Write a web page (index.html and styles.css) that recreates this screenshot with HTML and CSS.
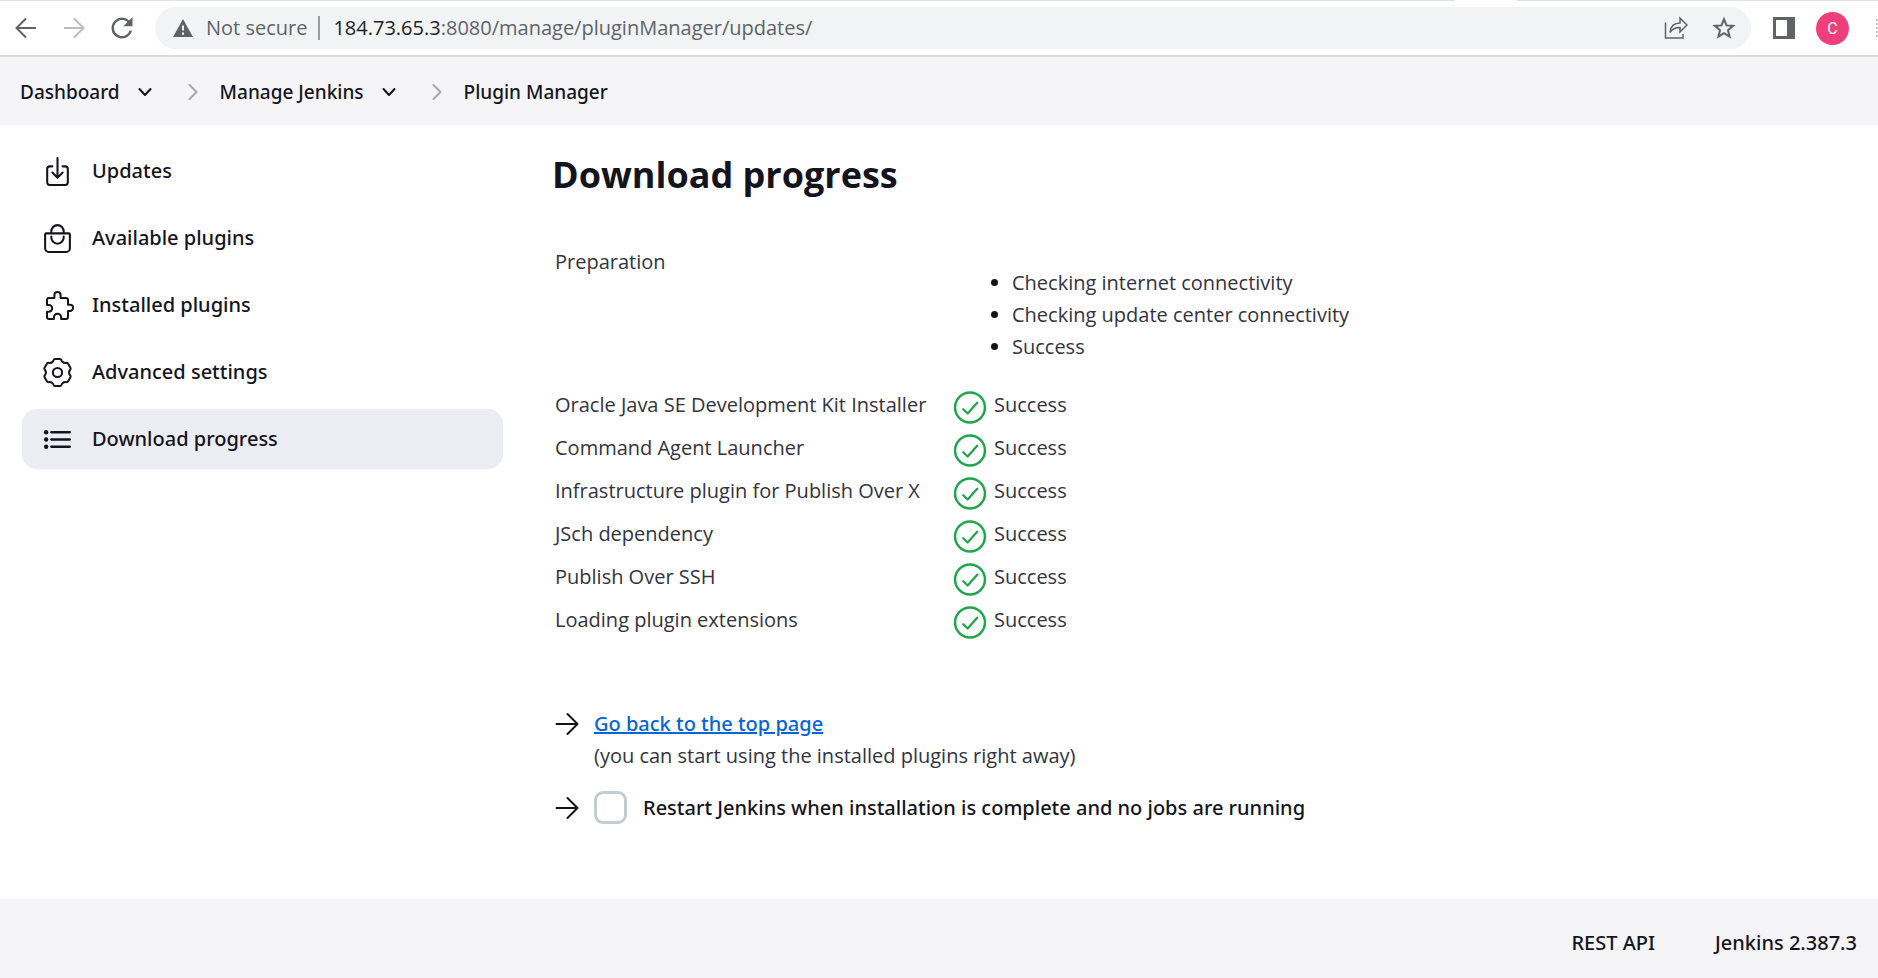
FILE: index.html
```html
<!DOCTYPE html>
<html lang="en">
<head>
<meta charset="utf-8">
<title>Download progress - Plugin Manager [Jenkins]</title>
<link rel="stylesheet" href="styles.css">
</head>
<body>
<svg class="defs" aria-hidden="true">
  <symbol id="success" viewBox="0 0 34 34"><circle cx="17" cy="17" r="15.4" stroke-width="2.5"/><path d="M10 18.8l4.6 4.4L24.4 12" stroke-width="2.3"/></symbol>
  <symbol id="arrow" viewBox="0 0 24 24"><path d="M1.5 12h21M12.5 2l10 10-10 10"/></symbol>
  <symbol id="down" viewBox="0 0 16 16"><path d="M2.500 5l5.500 6 5.500-6"/></symbol>
  <symbol id="next" viewBox="0 0 10 18"><path d="M1.5 2l7 7-7 7"/></symbol>
</svg>

<div class="toolbar">
  <div class="tabstrip"><span class="tab"></span></div>
  <div class="nav">
    <button class="tool" type="button" aria-label="Back"><svg viewBox="0 0 24 24"><path d="M22 12H3M12 2.500L2.500 12l9.500 9.500"/></svg></button>
    <button class="tool faded" type="button" aria-label="Forward"><svg viewBox="0 0 24 24"><path d="M2 12h19M12 2.500l9.500 9.500-9.500 9.500"/></svg></button>
    <button class="tool" type="button" aria-label="Reload"><svg viewBox="0 0 24 24"><path d="M20 7.500A9.200 9.200 0 1 0 20.800 14.500" stroke-width="2.400"/><path class="solid" d="M22.500 1v9.200h-9.200z"/></svg></button>
  </div>
  <div class="omnibox">
    <svg class="warn" viewBox="0 0 20 18"><path class="solid" d="M10 0l10 18H0z"/><path class="cut" d="M10 6.500v5M10 13.500v2.200"/></svg>
    <span class="insecure">Not secure</span>
    <span class="url"><b>184.73.65.3</b>:8080/manage/pluginManager/updates/</span>
    <button class="tool" type="button" aria-label="Share"><svg class="thin" viewBox="0 0 24 24"><path d="M1.500 6.500v15.500h17.500v-4M6 16.500C6.500 10 10.500 7 16 7V2l7 7-7 7v-4.500C11.500 11.500 8.500 12.500 6 16.500z"/></svg></button>
    <button class="tool" type="button" aria-label="Bookmark"><svg viewBox="0 0 24 24"><path d="M12 3.200l2.500 6.200 6.600.5-5.100 4.300 1.600 6.500L12 17.200l-5.600 3.500L8 14.200 2.900 9.900l6.600-.5z"/></svg></button>
  </div>
  <button class="tool" type="button" aria-label="Side panel"><svg viewBox="0 0 24 24"><path class="solid" fill-rule="evenodd" d="M1 1h22v22H1zM4 4v16h11V4z"/></svg></button>
  <button class="avatar" type="button">C</button>
  <span class="more"></span>
</div>

<nav class="crumbs" aria-label="Breadcrumb">
  <a href="#">Dashboard</a>
  <button class="caret" type="button" aria-label="Dashboard menu"><svg><use href="#down"/></svg></button>
  <svg class="sep"><use href="#next"/></svg>
  <a href="#">Manage Jenkins</a>
  <button class="caret" type="button" aria-label="Manage Jenkins menu"><svg><use href="#down"/></svg></button>
  <svg class="sep"><use href="#next"/></svg>
  <a href="#">Plugin Manager</a>
</nav>

<div class="page">
  <nav class="tasks" aria-label="Plugin Manager">
    <a class="task" href="#"><svg viewBox="0 0 512 512"><g stroke-width="32"><path d="M336 176h40a40 40 0 0140 40v208a40 40 0 01-40 40H136a40 40 0 01-40-40V216a40 40 0 0140-40h40"/><path d="M176 272l80 80 80-80M256 48v288"/></g></svg>Updates</a>
    <a class="task" href="#"><svg viewBox="0 0 512 512"><g stroke-width="32"><path d="M80 176a16 16 0 00-16 16v216c0 30.240 25.760 56 56 56h272c30.240 0 56-24.510 56-54.750V192a16 16 0 00-16-16zM160 176v-32a96 96 0 0196-96h0a96 96 0 0196 96v32"/><path d="M160 224v16a96 96 0 0096 96h0a96 96 0 0096-96v-16"/></g></svg>Available plugins</a>
    <a class="task" href="#"><svg viewBox="0 0 33 33"><path d="M6 10.900a2 2 0 0 1 2-2h5.400V6.100a3.100 3.100 0 0 1 6.200 0v2.800H25a2 2 0 0 1 2 2v4.800h2a3.100 3.100 0 0 1 0 6.200h-2v6a2 2 0 0 1-2 2h-4.900v-1.600a3.600 3.600 0 0 0-7.200 0v1.600H8a2 2 0 0 1-2-2v-5.200h1.800a3.400 3.400 0 0 0 0-6.800H6z"/></svg>Installed plugins</a>
    <a class="task" href="#"><svg viewBox="-16.500 -16.500 33 33"><circle r="4.600"/><path id="tooth" d="M-5.800-10Q-4.400-10.800-4-12.300-3.600-13.600-2.300-13.600H2.300Q3.600-13.600 4-12.300 4.400-10.800 5.800-10"/><use href="#tooth" transform="rotate(60)"/><use href="#tooth" transform="rotate(120)"/><use href="#tooth" transform="rotate(180)"/><use href="#tooth" transform="rotate(240)"/><use href="#tooth" transform="rotate(300)"/></svg>Advanced settings</a>
    <a class="task current" href="#" aria-current="page"><svg viewBox="0 0 512 512"><path d="M160 144h288M160 256h288M160 368h288" stroke-width="36"/><g class="solid"><circle cx="80" cy="144" r="34"/><circle cx="80" cy="256" r="34"/><circle cx="80" cy="368" r="34"/></g></svg>Download progress</a>
  </nav>

  <main class="main">
    <h1>Download progress</h1>
    <table class="log">
      <tr><td>Preparation</td><td><ul><li>Checking internet connectivity</li><li>Checking update center connectivity</li><li>Success</li></ul></td></tr>
      <tr><td>Oracle Java SE Development Kit Installer</td><td><div class="status"><svg><use href="#success"/></svg>Success</div></td></tr>
      <tr><td>Command Agent Launcher</td><td><div class="status"><svg><use href="#success"/></svg>Success</div></td></tr>
      <tr><td>Infrastructure plugin for Publish Over X</td><td><div class="status"><svg><use href="#success"/></svg>Success</div></td></tr>
      <tr><td>JSch dependency</td><td><div class="status"><svg><use href="#success"/></svg>Success</div></td></tr>
      <tr><td>Publish Over SSH</td><td><div class="status"><svg><use href="#success"/></svg>Success</div></td></tr>
      <tr><td>Loading plugin extensions</td><td><div class="status"><svg><use href="#success"/></svg>Success</div></td></tr>
    </table>
    <div class="step">
      <svg class="arrow"><use href="#arrow"/></svg>
      <div><a class="top" href="#">Go back to the top page</a><br>(you can start using the installed plugins right away)</div>
    </div>
    <div class="step restart">
      <svg class="arrow"><use href="#arrow"/></svg>
      <input type="checkbox" id="restart">
      <label for="restart">Restart Jenkins when installation is complete and no jobs are running</label>
    </div>
  </main>
</div>

<footer class="footer"><a href="#">REST API</a><a href="#">Jenkins 2.387.3</a></footer>
</body>
</html>
```
FILE: styles.css
```css
* { box-sizing: border-box; }
body {
  margin: 0;
  min-height: 100vh;
  display: flex;
  flex-direction: column;
  background: #fff;
  color: #14141f;
  font-family: "Open Sans", "Noto Sans", sans-serif;
  font-size: 20px;
  line-height: 32px;
}
a { color: inherit; text-decoration: none; }
button { padding: 0; border: 0; background: none; font: inherit; color: inherit; }
svg { flex: none; display: block; fill: none; stroke: currentColor; stroke-width: 2; stroke-linecap: round; stroke-linejoin: round; }
.solid { fill: currentColor; stroke: none; }
.defs { position: absolute; width: 0; height: 0; }

.toolbar {
  position: relative;
  display: flex;
  align-items: center;
  height: 57px;
  padding: 1px 0 0 14px;
  border-bottom: 2px solid #d9dadd;
  color: #5f6368;
  overflow: hidden;
}
.tabstrip { position: absolute; inset: 0 0 auto; height: 1px; background: #dfe1e9; }
.tab { position: absolute; right: 361px; width: 62px; height: 1px; background: #fff; }
.nav { display: flex; gap: 24px; margin-right: 21px; }
.tool { flex: none; width: 24px; height: 24px; }
.tool svg { width: 24px; height: 24px; stroke-width: 2; stroke-linecap: butt; stroke-linejoin: miter; }
.tool .thin { stroke-width: 1.500; }
.faded { color: #babcbe; }
.omnibox {
  flex: 1;
  display: flex;
  align-items: center;
  height: 42px;
  margin-right: 21px;
  padding: 0 15px 0 18px;
  border-radius: 21px;
  background: #f1f3f4;
}
.warn { width: 20px; height: 18px; margin-right: 13px; }
.cut { stroke: #f1f3f4; stroke-linecap: butt; }
.insecure { padding-right: 11px; margin-right: 13px; border-right: 2px solid #9a9da0; line-height: 24px; }
.url { flex: 1; }
.url b { font-weight: 400; color: #202124; }
.omnibox .tool + .tool { margin-left: 24px; }
.avatar {
  width: 33px;
  height: 33px;
  margin: 0 27px 0 20px;
  border-radius: 50%;
  background: #ee3f7a;
  color: #fff;
  font: 16px/33px Roboto, sans-serif;
}
.more { width: 2px; height: 18px; border-right: 2px dotted #c4c6c8; }

.crumbs {
  display: flex;
  align-items: center;
  height: 68px;
  padding: 2px 20px 0;
  background: #f5f5f8;
  font-family: "Noto Sans", sans-serif;
  font-size: 19px;
  font-weight: 500;
}
.caret { width: 16px; height: 16px; margin: 0 35px 0 17px; }
.caret svg { width: 16px; height: 16px; }
.sep { width: 10px; height: 18px; margin-right: 22px; color: #a6a6bb; }

.page { flex: 1; display: flex; gap: 49px; padding: 16px 22px 0; }
.tasks { width: 481px; display: flex; flex-direction: column; gap: 7px; font-family: "Noto Sans", sans-serif; font-weight: 500; }
.task { display: flex; align-items: center; gap: 18px; height: 60px; padding: 0 19px; border-radius: 15px; }
.task svg { width: 33px; height: 33px; }
.current { background: #ecedf3; }

.main { flex: 1; padding: 8px 0 60px; }
h1 { margin: 0 0 41px; font-size: 36px; line-height: 52px; font-weight: 700; }
.log { border-collapse: collapse; margin: 0 3px 65px; color: #333340; }
.log td { padding: 4px 0; vertical-align: top; }
.log td:first-child { min-width: 398px; }
.log ul { margin: 21px 0 18px; padding-left: 59px; }
.log li::marker { color: #14141f; }
.status { display: flex; gap: 7px; }
.status svg { width: 34px; height: 33px; margin-top: 2px; color: #1ea64b; }
.step { display: flex; align-items: flex-start; margin-left: 3px; color: #333340; }
.arrow { width: 24px; height: 24px; margin: 4px 15px 0 0; color: #14141f; }
.top { color: #0365d6; font-family: "Noto Sans", sans-serif; font-weight: 500; text-decoration: underline; text-decoration-thickness: 2px; }
.restart { align-items: center; margin-top: 19px; color: #14141f; font-family: "Noto Sans", sans-serif; font-weight: 500; }
.restart .arrow { margin-top: 0; }
.restart input { appearance: none; width: 33px; height: 33px; margin: 0 16px 0 0; border: 3px solid #c3ccd1; border-radius: 9px; }

.footer {
  display: flex;
  justify-content: flex-end;
  align-items: center;
  gap: 60px;
  height: 79px;
  padding: 9px 21px 0;
  background: #f5f5f8;
  font-family: "Noto Sans", sans-serif;
  font-weight: 500;
}
```
